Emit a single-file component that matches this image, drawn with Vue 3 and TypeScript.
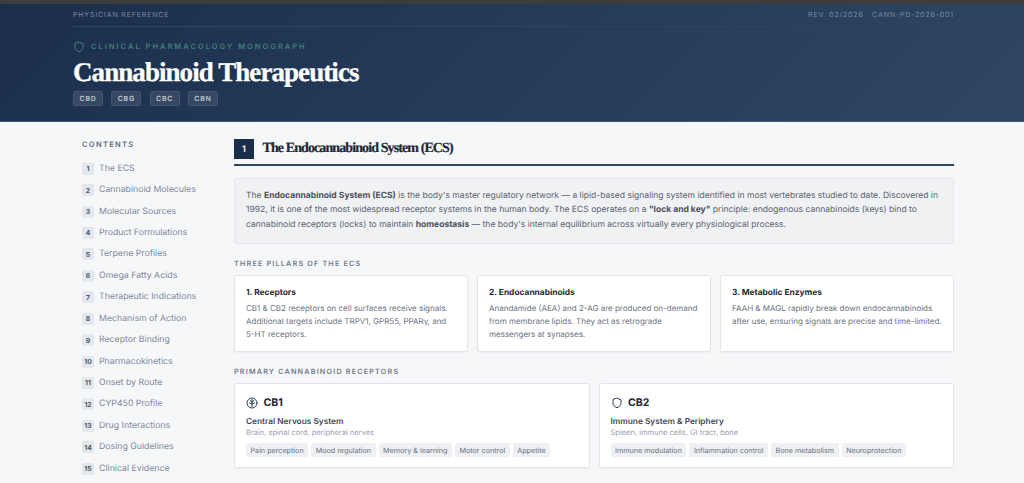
<template>
  <div class="page">
    <div class="topline"></div>
    <header class="hero">
      <div class="hero-inner">
        <div class="meta">
          <span>PHYSICIAN REFERENCE</span>
          <span>REV. 02/2026 · CANN-PD-2026-001</span>
        </div>
        <div class="eyebrow">
          <svg width="12" height="12" viewBox="0 0 24 24" fill="none" stroke="#3f7f78" stroke-width="2" stroke-linecap="round" stroke-linejoin="round">
            <path d="M12 2.500l8 3v6.200c0 4.800-3.300 8-8 9.800-4.700-1.800-8-5-8-9.800V5.500z" />
          </svg>
          <span>CLINICAL PHARMACOLOGY MONOGRAPH</span>
        </div>
        <h1>Cannabinoid Therapeutics</h1>
        <div class="chips">
          <span v-for="c in compounds" :key="c" class="chip">{{ c }}</span>
        </div>
      </div>
    </header>

    <div class="layout">
      <nav class="toc">
        <div class="toc-title">CONTENTS</div>
        <div v-for="(item, i) in contents" :key="item" class="toc-row">
          <span class="toc-num">{{ i + 1 }}</span>
          <span>{{ item }}</span>
        </div>
      </nav>

      <main class="main">
        <div class="section-head">
          <span class="section-num">1</span>
          <h2>The Endocannabinoid System (ECS)</h2>
        </div>

        <div class="callout">
          The <strong>Endocannabinoid System (ECS)</strong> is the body's master regulatory network — a lipid-based signaling system identified in most vertebrates studied to date. Discovered in 1992, it is one of the most widespread receptor systems in the human body. The ECS operates on a <strong>"lock and key"</strong> principle: endogenous cannabinoids (keys) bind to cannabinoid receptors (locks) to maintain <strong>homeostasis</strong> — the body's internal equilibrium across virtually every physiological process.
        </div>

        <div class="label">THREE PILLARS OF THE ECS</div>
        <div class="pillars">
          <div v-for="p in pillars" :key="p.title" class="card pillar">
            <h3>{{ p.title }}</h3>
            <p>{{ p.text }}</p>
          </div>
        </div>

        <div class="label">PRIMARY CANNABINOID RECEPTORS</div>
        <div class="receptors">
          <div class="card receptor">
            <div class="receptor-name">
              <svg width="12" height="12" viewBox="0 0 24 24" fill="none" stroke="#2c3e55" stroke-width="2" stroke-linecap="round" stroke-linejoin="round">
                <circle cx="12" cy="12" r="10" />
                <path d="M12 5v14M12 10L8 7M12 10l4-3M12 14l-5-2M12 14l5-2" />
              </svg>
              <span>CB1</span>
            </div>
            <div class="receptor-sys">Central Nervous System</div>
            <div class="receptor-loc">Brain, spinal cord, peripheral nerves</div>
            <div class="tags">
              <span v-for="t in cb1Tags" :key="t" class="tag">{{ t }}</span>
            </div>
          </div>
          <div class="card receptor">
            <div class="receptor-name">
              <svg width="12" height="12" viewBox="0 0 24 24" fill="none" stroke="#2c3e55" stroke-width="2" stroke-linecap="round" stroke-linejoin="round">
                <path d="M12 2.500l8 3v6.200c0 4.800-3.300 8-8 9.800-4.700-1.800-8-5-8-9.800V5.500z" />
              </svg>
              <span>CB2</span>
            </div>
            <div class="receptor-sys">Immune System &amp; Periphery</div>
            <div class="receptor-loc">Spleen, immune cells, GI tract, bone</div>
            <div class="tags">
              <span v-for="t in cb2Tags" :key="t" class="tag">{{ t }}</span>
            </div>
          </div>
        </div>
      </main>
    </div>
  </div>
</template>

<script setup lang="ts">
const compounds: string[] = ['CBD', 'CBG', 'CBC', 'CBN']

const contents: string[] = [
  'The ECS',
  'Cannabinoid Molecules',
  'Molecular Sources',
  'Product Formulations',
  'Terpene Profiles',
  'Omega Fatty Acids',
  'Therapeutic Indications',
  'Mechanism of Action',
  'Receptor Binding',
  'Pharmacokinetics',
  'Onset by Route',
  'CYP450 Profile',
  'Drug Interactions',
  'Dosing Guidelines',
  'Clinical Evidence',
]

const pillars = [
  {
    title: '1. Receptors',
    text: 'CB1 & CB2 receptors on cell surfaces receive signals. Additional targets include TRPV1, GPR55, PPARγ, and 5-HT receptors.',
  },
  {
    title: '2. Endocannabinoids',
    text: 'Anandamide (AEA) and 2-AG are produced on-demand from membrane lipids. They act as retrograde messengers at synapses.',
  },
  {
    title: '3. Metabolic Enzymes',
    text: 'FAAH & MAGL rapidly break down endocannabinoids after use, ensuring signals are precise and time-limited.',
  },
]

const cb1Tags: string[] = ['Pain perception', 'Mood regulation', 'Memory & learning', 'Motor control', 'Appetite']
const cb2Tags: string[] = ['Immune modulation', 'Inflammation control', 'Bone metabolism', 'Neuroprotection']
</script>

<style>
html,
body {
  margin: 0;
  background: #f6f7f9;
}
</style>

<style scoped>
.page {
  height: 483px;
  overflow: hidden;
  background: #f6f7f9;
  font-family: Inter, "Liberation Sans", sans-serif;
  text-rendering: geometricPrecision;
}

.topline {
  height: 4px;
  background: #3d3d3d;
}

.hero {
  height: 118px;
  box-sizing: border-box;
  background: linear-gradient(135deg, #1b2f4d 0%, #2f4764 100%);
  border-bottom: 1px solid #3b5a80;
  padding: 0 70px 0 73px;
}

.meta {
  display: flex;
  justify-content: space-between;
  padding: 6px 0 7px;
  border-bottom: 1px solid #2d4564;
  font-size: 7px;
  line-height: 9px;
  letter-spacing: 0.850px;
  color: #7c8a9d;
}

.eyebrow {
  display: flex;
  align-items: center;
  gap: 6px;
  margin-top: 14px;
  font-size: 7.500px;
  line-height: 12px;
  font-weight: 600;
  letter-spacing: 2px;
  color: #3f7f78;
}

h1 {
  margin: 3px 0 0;
  font-family: "Liberation Serif", serif;
  font-size: 27px;
  line-height: 33px;
  font-weight: 700;
  letter-spacing: -0.930px;
  color: #fff;
  -webkit-text-stroke: 0.300px #fff;
}

.chips {
  display: flex;
  gap: 8.300px;
  margin-top: 2px;
}

.chip {
  width: 30px;
  height: 15px;
  box-sizing: border-box;
  display: flex;
  align-items: center;
  justify-content: center;
  background: #364862;
  border: 1px solid #435570;
  border-radius: 1.500px;
  font-size: 7px;
  font-weight: 600;
  letter-spacing: 0.700px;
  color: #c0c9d4;
}

.layout {
  display: flex;
  padding: 0 70px 0 82px;
}

.toc {
  width: 152px;
  flex-shrink: 0;
  padding-top: 18px;
}

.toc-title {
  font-size: 7.500px;
  line-height: 9px;
  font-weight: 600;
  letter-spacing: 1.300px;
  color: #5f6b7d;
  margin-bottom: 9px;
}

.toc-row {
  display: flex;
  align-items: center;
  gap: 5px;
  height: 21.430px;
  font-size: 8.750px;
  color: #7d8799;
}

.toc-num {
  width: 12px;
  height: 12px;
  display: flex;
  align-items: center;
  justify-content: center;
  background: #e4e7eb;
  border-radius: 1px;
  font-size: 6.800px;
  font-weight: 700;
  color: #4c596b;
}

.main {
  flex: 1;
  min-width: 0;
  padding-top: 17px;
}

.section-head {
  display: flex;
  align-items: center;
  gap: 8.500px;
  padding-bottom: 5px;
  border-bottom: 2px solid #34465e;
}

.section-num {
  width: 20px;
  height: 20px;
  display: flex;
  align-items: center;
  justify-content: center;
  background: #1b2f4d;
  font-size: 9px;
  font-weight: 600;
  color: #fff;
}

h2 {
  margin: 0;
  font-family: "Liberation Serif", serif;
  font-size: 14px;
  line-height: 20px;
  font-weight: 700;
  letter-spacing: -0.900px;
  color: #1c2736;
  -webkit-text-stroke: 0.200px #1c2736;
}

.callout {
  margin-top: 11.500px;
  padding: 10.500px 11px 11.500px;
  background: #f0f1f3;
  border: 1px solid #e3e5e9;
  border-radius: 3px;
  font-size: 8.550px;
  line-height: 14.300px;
  color: #5b6370;
}

.callout strong {
  font-weight: 700;
  color: #484f5b;
}

.label {
  margin-top: 15px;
  font-size: 7.200px;
  line-height: 9px;
  font-weight: 600;
  letter-spacing: 1.200px;
  color: #6e7a8c;
}

.pillars {
  display: grid;
  grid-template-columns: repeat(3, 1fr);
  gap: 9px;
  margin-top: 7px;
}

.card {
  box-sizing: border-box;
  background: #fff;
  border: 1px solid #e3e5ea;
  border-radius: 2.500px;
  box-shadow: 0 1px 2px rgba(30, 40, 60, 0.05);
}

.pillar {
  height: 77px;
  padding: 11px;
}

h3 {
  margin: 0 0 3px;
  font-size: 8.400px;
  line-height: 12px;
  font-weight: 700;
  color: #1f2733;
}

.pillar p {
  margin: 0;
  font-size: 8px;
  line-height: 12.800px;
  color: #6a7280;
}

.receptors {
  display: grid;
  grid-template-columns: repeat(2, 1fr);
  gap: 9px;
  margin-top: 7px;
}

.receptor {
  height: 85px;
  padding: 12px 11px;
}

.receptor-name {
  display: flex;
  align-items: center;
  gap: 5.500px;
  font-size: 10.500px;
  line-height: 14px;
  font-weight: 700;
  color: #1f2733;
}

.receptor-sys {
  margin-top: 7px;
  font-size: 8.300px;
  line-height: 10px;
  font-weight: 600;
  color: #3f4654;
}

.receptor-loc {
  margin-top: 0;
  font-size: 7.500px;
  line-height: 11px;
  color: #9aa2af;
}

.tags {
  display: flex;
  gap: 3px;
  margin-top: 5px;
}

.tag {
  height: 14px;
  padding: 0 4.500px;
  display: flex;
  align-items: center;
  background: #eef0f3;
  border-radius: 2.500px;
  font-size: 7.200px;
  color: #697282;
}
</style>
